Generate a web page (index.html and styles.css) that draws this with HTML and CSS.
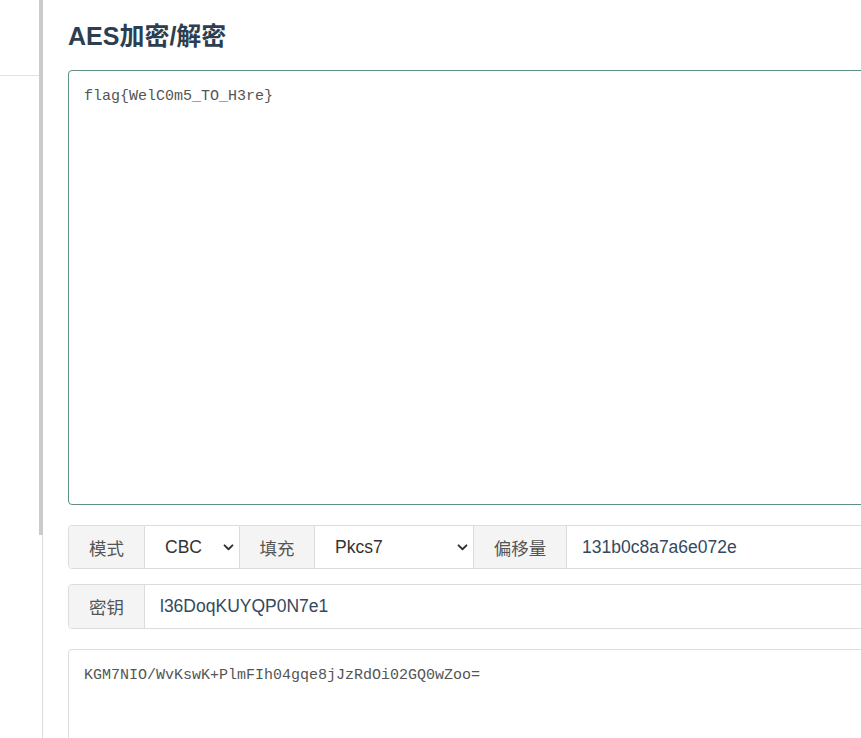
FILE: index.html
```html
<!DOCTYPE html>
<html lang="zh-CN">
<head>
<meta charset="utf-8">
<title>AES加密/解密</title>
<link rel="stylesheet" href="styles.css">
</head>
<body>
<div class="page">
  <aside class="sidebar">
    <div class="side-head"></div>
    <div class="thumb"></div>
  </aside>
  <main class="main">
    <h2 class="title">AES加密/解密</h2>
    <textarea class="box box-focus" spellcheck="false">flag{WelC0m5_TO_H3re}</textarea>
    <div class="group">
      <span class="addon w75">模式</span>
      <div class="select w95"><span>CBC</span><svg class="chev" viewBox="0 0 12 8" width="11" height="7"><path d="M1.5 1.5 L6 6 L10.5 1.5" fill="none" stroke="#333" stroke-width="2.2" stroke-linecap="round" stroke-linejoin="round"/></svg></div>
      <span class="addon w75 sep">填充</span>
      <div class="select w159"><span>Pkcs7</span><svg class="chev" viewBox="0 0 12 8" width="11" height="7"><path d="M1.5 1.5 L6 6 L10.5 1.5" fill="none" stroke="#333" stroke-width="2.2" stroke-linecap="round" stroke-linejoin="round"/></svg></div>
      <span class="addon w93 sep">偏移量</span>
      <span class="field">131b0c8a7a6e072e</span>
    </div>
    <div class="group group-2">
      <span class="addon w75">密钥</span>
      <span class="field">l36DoqKUYQP0N7e1</span>
    </div>
    <textarea class="box box-out" spellcheck="false">KGM7NIO/WvKswK+PlmFIh04gqe8jJzRdOi02GQ0wZoo=</textarea>
  </main>
</div>
</body>
</html>
```
FILE: styles.css
```css
html, body {
  margin: 0;
  padding: 0;
  background: #fff;
  overflow: hidden;
}
body {
  font-family: "Liberation Sans", "Noto Sans CJK SC", Arial, sans-serif;
  color: #333;
}
.page {
  display: flex;
  width: 1100px;
  height: 738px;
}
.sidebar {
  position: relative;
  width: 43px;
  flex: 0 0 43px;
  box-sizing: border-box;
  border-right: 1px solid #dcdcdc;
}
.side-head {
  width: 39px;
  height: 75px;
  border-bottom: 1px solid #e2e2e2;
}
.thumb {
  position: absolute;
  top: 0;
  left: 39px;
  width: 4px;
  height: 535px;
  background: #cbcbcb;
}
.main {
  padding-left: 25px;
  width: 1000px;
}
.title {
  margin: 21px 0 19px;
  font-size: 25px;
  line-height: 30px;
  font-weight: bold;
  color: #2c3e50;
}
.box {
  display: block;
  width: 1000px;
  box-sizing: border-box;
  margin: 0;
  padding: 15px;
  font-family: "Liberation Mono", monospace;
  font-size: 15px;
  line-height: 21.4px;
  color: #555;
  border-radius: 4px;
  resize: none;
  outline: none;
  overflow: hidden;
}
.box-focus {
  height: 435px;
  border: 1px solid #5e9183;
}
.box-out {
  height: 200px;
  margin-top: 20px;
  border: 1px solid #dcdcdc;
}
.group {
  display: flex;
  width: 1000px;
  height: 44px;
  box-sizing: border-box;
  margin-top: 20px;
  border: 1px solid #dcdcdc;
  border-radius: 4px;
  overflow: hidden;
  font-size: 17.5px;
}
.group-2 {
  margin-top: 15px;
  height: 45px;
}
.addon {
  display: flex;
  align-items: center;
  justify-content: center;
  box-sizing: border-box;
  background: #f4f4f4;
  color: #555;
}
.sep {
  border-left: 1px solid #dcdcdc;
}
.w75 { flex: 0 0 75px; }
.w93 { flex: 0 0 93px; }
.w95 { flex: 0 0 95px; }
.w159 { flex: 0 0 159px; }
.select {
  display: flex;
  align-items: center;
  justify-content: space-between;
  box-sizing: border-box;
  border-left: 1px solid #dcdcdc;
  padding: 0 5px 0 20px;
  color: #333;
}
.chev {
  display: block;
}
.field {
  display: flex;
  align-items: center;
  flex: 1;
  box-sizing: border-box;
  border-left: 1px solid #dcdcdc;
  padding-left: 15px;
  color: #34495e;
}
```
